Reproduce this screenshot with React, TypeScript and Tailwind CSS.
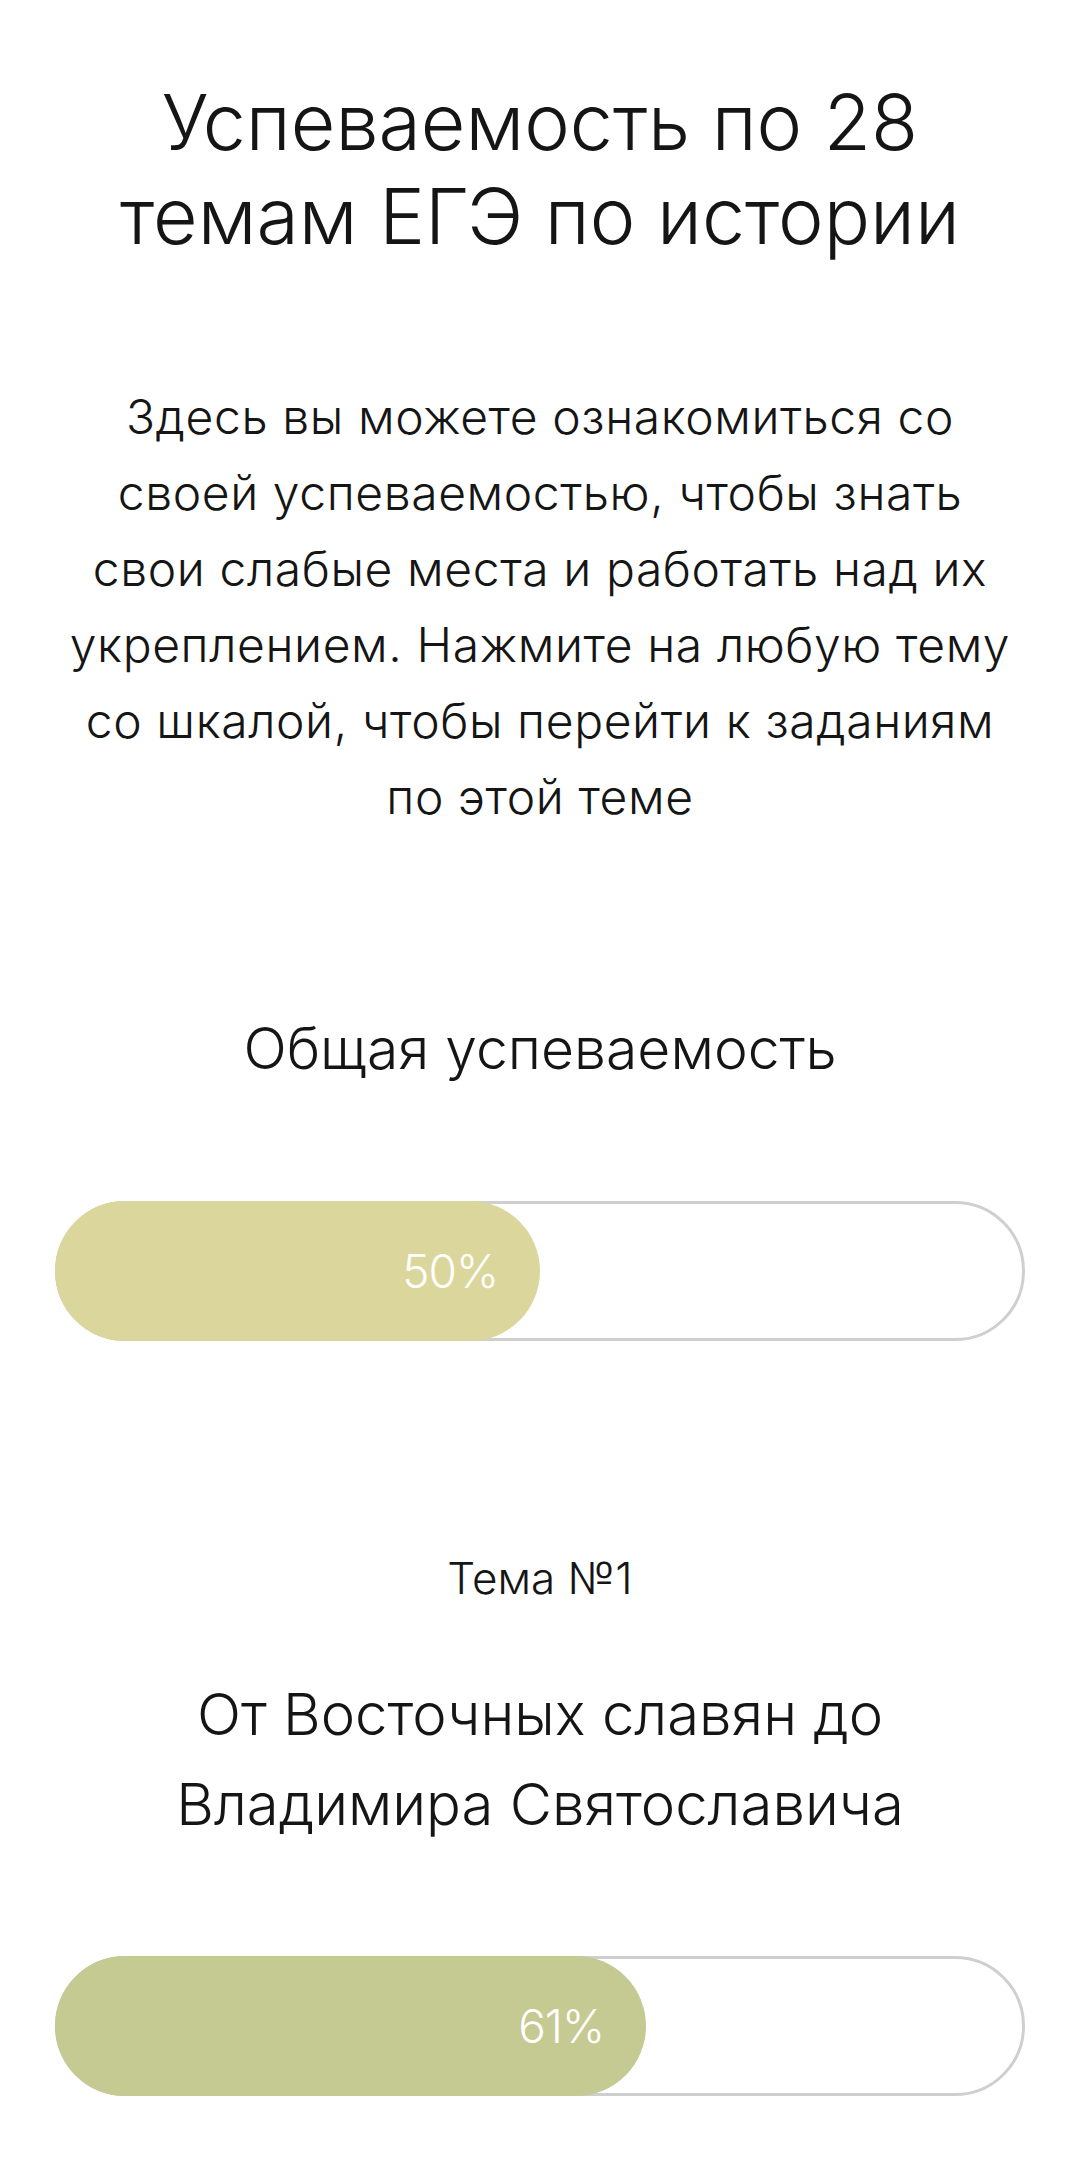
import React from "react";

type Topic = {
  label: string;
  title: string[];
  percent: number;
  color: string;
};

const topics: Topic[] = [
  {
    label: "Тема №1",
    title: ["От Восточных славян до", "Владимира Святославича"],
    percent: 61,
    color: "bg-[#c5ca93]",
  },
];

function ProgressBar({ percent, fill }: { percent: number; fill: string }) {
  return (
    <div className="relative mx-[55px] h-[140px] rounded-full border-[3px] border-[#cfcfcf] bg-white">
      <div
        className={`absolute -left-[3px] -top-[3px] -bottom-[3px] flex items-center justify-end rounded-full pr-[42px] ${fill}`}
        style={{ width: `calc(${percent}% + 3px)` }}
      >
        <span className="text-[46px] font-light leading-none tracking-[-1px] text-white">{percent}%</span>
      </div>
    </div>
  );
}

export default function App() {
  return (
    <div
      className="min-h-screen w-[1080px] bg-white text-center text-[#151515]"
      style={{ fontFamily: "Inter, 'Noto Sans', sans-serif" }}
    >
      <h1 className="pt-[75px] text-[77px] font-light leading-[94px]">
        Успеваемость по 28
        <br />
        темам ЕГЭ по истории
      </h1>

      <p className="mt-[116px] text-[48px] font-light leading-[76px] tracking-[0.6px]">
        Здесь вы можете ознакомиться со
        <br />
        своей успеваемостью, чтобы знать
        <br />
        свои слабые места и работать над их
        <br />
        укреплением. Нажмите на любую тему
        <br />
        со шкалой, чтобы перейти к заданиям
        <br />
        по этой теме
      </p>

      <h2 className="mt-[178px] text-[57px] font-light leading-[72px]">Общая успеваемость</h2>

      <div className="mt-[116px]">
        <ProgressBar percent={50} fill="bg-[#dbd69b]" />
      </div>

      {topics.map((t) => (
        <div key={t.label} className="mt-[209px]">
          <div className="text-[44px] font-light leading-[56px]">{t.label}</div>
          <h3 className="mt-[63px] text-[58px] font-light leading-[90px]">
            {t.title[0]}
            <br />
            {t.title[1]}
          </h3>
          <div className="mt-[107px]">
            <ProgressBar percent={t.percent} fill={t.color} />
          </div>
        </div>
      ))}
    </div>
  );
}
